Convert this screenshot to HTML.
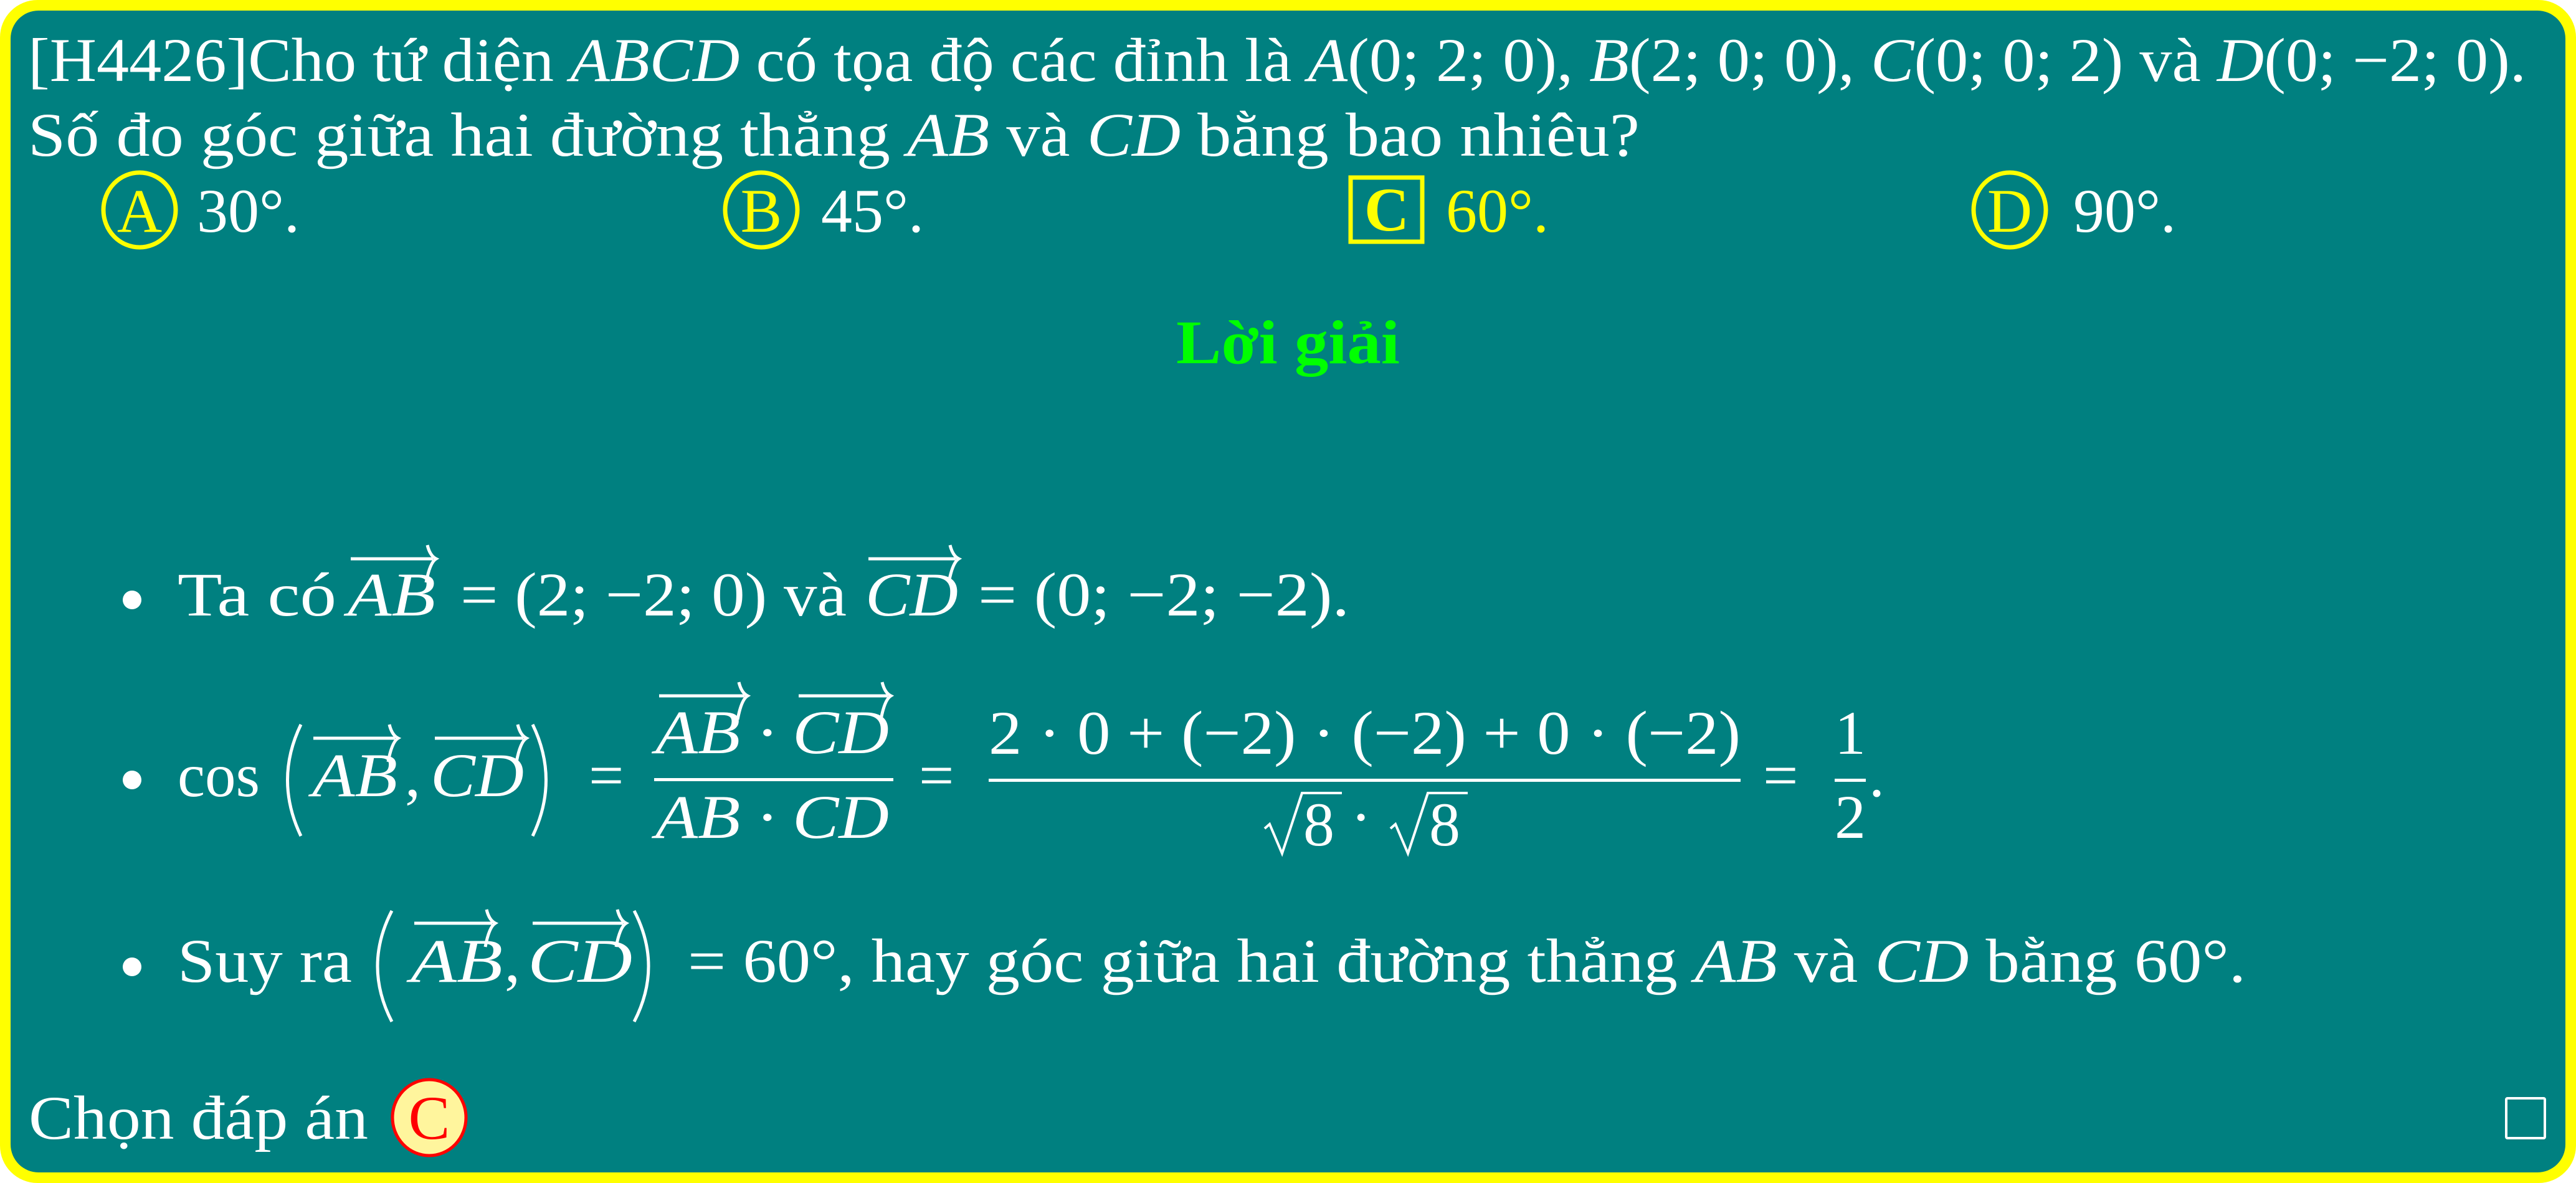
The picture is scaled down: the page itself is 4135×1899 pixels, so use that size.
<!DOCTYPE html>
<html><head><meta charset="utf-8"><style>
html,body{margin:0;padding:0;background:#fff;}
svg{display:block}
text{font-family:"Liberation Serif",serif;font-size:100px;fill:#fff}
.i{font-style:italic}
</style></head><body>
<svg width="4135" height="1899" viewBox="0 0 4135 1899" xmlns="http://www.w3.org/2000/svg">
<rect x="0" y="0" width="4135" height="1899" rx="60" fill="#ffff00"/>
<rect x="17" y="17" width="4101" height="1865" rx="45" fill="#008080"/>

<!-- question -->
<text x="45" y="130" textLength="4010" lengthAdjust="spacingAndGlyphs">[H4426]Cho tứ diện <tspan class="i">ABCD</tspan> có tọa độ các đỉnh là <tspan class="i">A</tspan>(0; 2; 0), <tspan class="i">B</tspan>(2; 0; 0), <tspan class="i">C</tspan>(0; 0; 2) và <tspan class="i">D</tspan>(0; −2; 0).</text>
<text x="45" y="250" textLength="2587" lengthAdjust="spacingAndGlyphs">Số đo góc giữa hai đường thẳng <tspan class="i">AB</tspan> và <tspan class="i">CD</tspan> bằng bao nhiêu?</text>

<!-- options -->
<ellipse cx="224" cy="337" rx="58" ry="60" fill="none" stroke="#ffff00" stroke-width="7"/>
<text x="224" y="372" text-anchor="middle" style="fill:#ffff00">A</text>
<text x="316" y="372">30°.</text>
<ellipse cx="1222" cy="337" rx="58" ry="60" fill="none" stroke="#ffff00" stroke-width="7"/>
<text x="1222" y="372" text-anchor="middle" style="fill:#ffff00">B</text>
<text x="1318" y="372">45°.</text>
<rect x="2168" y="285" width="115" height="103" fill="none" stroke="#ffff00" stroke-width="7"/>
<text x="2226" y="370" text-anchor="middle" style="fill:#ffff00;font-weight:bold">C</text>
<text x="2321" y="372" style="fill:#ffff00">60°.</text>
<ellipse cx="3226" cy="337" rx="58" ry="60" fill="none" stroke="#ffff00" stroke-width="7"/>
<text x="3226" y="372" text-anchor="middle" style="fill:#ffff00">D</text>
<text x="3328" y="372">90°.</text>

<text x="1888" y="583" textLength="359" lengthAdjust="spacingAndGlyphs" style="fill:#00ff00;font-weight:bold">Lời giải</text>

<!-- bullet 1 -->
<circle cx="212" cy="963" r="15" fill="#fff"/>
<text x="285" y="988" textLength="255" lengthAdjust="spacingAndGlyphs">Ta có</text>
<text x="558" y="988" class="i" textLength="141" lengthAdjust="spacingAndGlyphs">AB</text>
<text x="739" y="988" textLength="620" lengthAdjust="spacingAndGlyphs">= (2; −2; 0) và</text>
<text x="1389" y="988" class="i" textLength="149" lengthAdjust="spacingAndGlyphs">CD</text>
<text x="1570" y="988" textLength="596" lengthAdjust="spacingAndGlyphs">= (0; −2; −2).</text>
<g stroke="#fff" stroke-width="5" fill="none">
<path d="M563 897 H695 M686 875 Q690 892 700 897 Q690 903 684 935"/>
<path d="M1394 897 H1534 M1525 875 Q1529 892 1539 897 Q1529 903 1523 935"/>
</g>

<!-- bullet 2 -->
<circle cx="212" cy="1252" r="15" fill="#fff"/>
<text x="285" y="1278" textLength="132" lengthAdjust="spacingAndGlyphs">cos</text>
<path d="M483 1163 Q440 1252 483 1342" stroke="#fff" stroke-width="5" fill="none"/>
<text x="501" y="1278" class="i" textLength="137" lengthAdjust="spacingAndGlyphs">AB</text>
<text x="650" y="1278">,</text>
<text x="691" y="1278" class="i" textLength="150" lengthAdjust="spacingAndGlyphs">CD</text>
<path d="M855 1163 Q898 1252 855 1342" stroke="#fff" stroke-width="5" fill="none"/>
<text x="945" y="1278">=</text>
<text x="1052" y="1209" class="i" textLength="375" lengthAdjust="spacingAndGlyphs">AB · CD</text>
<rect x="1050" y="1249" width="384" height="5" fill="#fff"/>
<text x="1052" y="1345" class="i" textLength="375" lengthAdjust="spacingAndGlyphs">AB · CD</text>
<g stroke="#fff" stroke-width="5" fill="none">
<path d="M503 1185 H634 M625 1163 Q629 1180 639 1185 Q629 1191 623 1223"/>
<path d="M698 1185 H840 M831 1163 Q835 1180 845 1185 Q835 1191 829 1223"/>
<path d="M1058 1117 H1195 M1186 1095 Q1190 1112 1200 1117 Q1190 1123 1184 1155"/>
<path d="M1282 1117 H1425 M1416 1095 Q1420 1112 1430 1117 Q1420 1123 1414 1155"/>
</g>
<text x="1475" y="1278">=</text>
<text x="1587" y="1210" textLength="1207" lengthAdjust="spacingAndGlyphs">2 · 0 + (−2) · (−2) + 0 · (−2)</text>
<rect x="1587" y="1250" width="1207" height="5" fill="#fff"/>
<path d="M2030 1330 L2038 1323 L2058 1370 L2090 1273 H2154" stroke="#fff" stroke-width="4" fill="none"/>
<text x="2092" y="1357">8</text>
<text x="2168" y="1345">·</text>
<path d="M2232 1330 L2240 1323 L2260 1370 L2292 1273 H2356" stroke="#fff" stroke-width="4" fill="none"/>
<text x="2294" y="1357">8</text>
<text x="2830" y="1278">=</text>
<text x="2970" y="1210" text-anchor="middle">1</text>
<rect x="2945" y="1250" width="50" height="5" fill="#fff"/>
<text x="2970" y="1345" text-anchor="middle">2</text>
<text x="3000" y="1278">.</text>

<!-- bullet 3 -->
<circle cx="212" cy="1552" r="15" fill="#fff"/>
<text x="285" y="1576" textLength="280" lengthAdjust="spacingAndGlyphs">Suy ra</text>
<path d="M629 1462 Q583 1551 629 1640" stroke="#fff" stroke-width="5" fill="none"/>
<text x="659" y="1576" class="i" textLength="148" lengthAdjust="spacingAndGlyphs">AB</text>
<text x="810" y="1576">,</text>
<text x="847" y="1576" class="i" textLength="168" lengthAdjust="spacingAndGlyphs">CD</text>
<path d="M1018 1462 Q1064 1551 1018 1640" stroke="#fff" stroke-width="5" fill="none"/>
<g stroke="#fff" stroke-width="5" fill="none">
<path d="M665 1482 H790 M781 1460 Q785 1477 795 1482 Q785 1488 779 1520"/>
<path d="M855 1482 H1000 M991 1460 Q995 1477 1005 1482 Q995 1488 989 1520"/>
</g>
<text x="1104" y="1576" textLength="2501" lengthAdjust="spacingAndGlyphs">= 60°, hay góc giữa hai đường thẳng <tspan class="i">AB</tspan> và <tspan class="i">CD</tspan> bằng 60°.</text>

<!-- answer -->
<text x="46" y="1828" textLength="545" lengthAdjust="spacingAndGlyphs">Chọn đáp án</text>
<ellipse cx="689" cy="1794" rx="59" ry="61" fill="#fff59d" stroke="#ff0000" stroke-width="5"/>
<text x="689" y="1828" text-anchor="middle" style="fill:#ff0000">C</text>
<rect x="4023" y="1763" width="62" height="64" fill="none" stroke="#fff" stroke-width="4" rx="2"/>
</svg>
</body></html>
